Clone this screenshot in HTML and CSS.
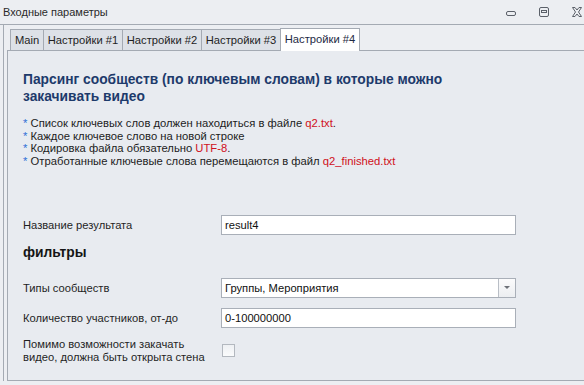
FILE: index.html
```html
<!DOCTYPE html>
<html lang="ru">
<head>
    <meta charset="UTF-8">
    <title>Входные параметры</title>
    <link rel="stylesheet" href="styles.css">
</head>
<body>
    <div class="titlebar">
        <span class="title">Входные параметры</span>
        <div class="controls">
            <svg class="ctl" width="12" height="12" viewBox="0 0 12 12">
                <rect x="1.5" y="5.5" width="9" height="4" rx="1.5" fill="none" stroke="#5b6069"/>
            </svg>
            <svg class="ctl" width="12" height="12" viewBox="0 0 12 12">
                <rect x="1.5" y="1.5" width="9" height="9" rx="1.5" fill="none" stroke="#5b6069"/>
                <rect x="3.5" y="4.5" width="5" height="2" fill="none" stroke="#5b6069"/>
            </svg>
            <svg class="ctl" width="12" height="12" viewBox="0 0 12 12">
                <path d="M1.5 1.5h2.5l2 2.5 2-2.5h2.5l-3 4.5 3 4.5h-2.5l-2-2.5-2 2.5h-2.5l3-4.5z" fill="none" stroke="#5b6069" stroke-linejoin="round"/>
            </svg>
        </div>
    </div>

    <div class="frame">
        <div class="tabs">
            <div class="tab tab-main">Main</div>
            <div class="tab">Настройки #1</div>
            <div class="tab">Настройки #2</div>
            <div class="tab">Настройки #3</div>
            <div class="tab active">Настройки #4</div>
        </div>

        <div class="panel">
            <h1 class="heading">Парсинг сообществ (по ключевым словам) в которые можно закачивать видео</h1>

            <ul class="notes">
                <li><span class="star">*</span> Список ключевых слов должен находиться в файле <span class="red">q2.txt</span>.</li>
                <li><span class="star">*</span> Каждое ключевое слово на новой строке</li>
                <li><span class="star">*</span> Кодировка файла обязательно <span class="red">UTF-8</span>.</li>
                <li><span class="star">*</span> Отработанные ключевые слова перемещаются в файл <span class="red">q2_finished.txt</span></li>
            </ul>

            <div class="row first">
                <label class="label">Название результата</label>
                <div class="field">result4</div>
            </div>

            <h2 class="section">фильтры</h2>

            <div class="row combo-row">
                <label class="label">Типы сообществ</label>
                <div class="field combo">
                    <span class="combo-text">Группы, Мероприятия</span>
                    <span class="combo-btn"><span class="arrow"></span></span>
                </div>
            </div>

            <div class="row">
                <label class="label">Количество участников, от-до</label>
                <div class="field">0-100000000</div>
            </div>

            <div class="row check-row">
                <label class="label">Помимо возможности закачать видео, должна быть открыта стена</label>
                <div class="checkbox"></div>
            </div>
        </div>
    </div>
</body>
</html>
```

FILE: styles.css
```css
body {
    margin: 0;
    font-family: "Liberation Sans", Arial, sans-serif;
    font-size: 11px;
    color: #1c1c1c;
    background-color: #eceef2;
    height: 385px;
    overflow: hidden;
}

.titlebar {
    height: 24px;
    display: flex;
    align-items: center;
    justify-content: space-between;
    padding-left: 3px;
    border-bottom: 1px solid #a4aab3;
}

.title {
    font-size: 11px;
    color: #2a2a2a;
}

.controls {
    display: flex;
    gap: 21px;
    padding-right: 1px;
    margin-top: -1px;
}

.frame {
    margin-left: 3px;
    border-left: 1px solid #a4aab3;
    padding: 3px 3px 0 3px;
}

.tabs {
    display: flex;
    align-items: flex-end;
    padding-left: 3px;
    height: 22px;
}

.tab {
    box-sizing: border-box;
    width: 80px;
    height: 21px;
    line-height: 20px;
    text-align: center;
    font-size: 11.2px;
    color: #1e1e1e;
    background-color: #dde1e7;
    border: 1px solid #a4aab3;
    border-bottom: none;
    margin-right: -1px;
}

.tab-main {
    width: 34px;
}

.tab.active {
    height: 23px;
    background-color: #fff;
    position: relative;
    z-index: 1;
    margin-bottom: -1px;
    color: #1e2a44;
}

.panel {
    width: 572px;
    height: 309px;
    border: 1px solid #a4aab3;
    background-color: #e8ebf0;
    padding: 20px 0 0 15px;
    box-sizing: content-box;
}

.heading {
    margin: 0;
    width: 450px;
    font-size: 13.8px;
    line-height: 17px;
    font-weight: bold;
    color: #1d3a6b;
}

.notes {
    list-style: none;
    margin: 12px 0 0 0;
    padding: 0;
    line-height: 12.7px;
    font-size: 11.25px;
}

.star {
    color: #2f6fd6;
}

.red {
    color: #d01020;
}

.row {
    display: grid;
    grid-template-columns: 198px 295px;
    align-items: center;
    margin-top: 10px;
}

.row.first {
    margin-top: 47px;
}

.row.combo-row {
    margin-top: 17px;
}

.label {
    font-size: 11.2px;
    color: #1f1f1f;
}

.field {
    height: 18px;
    line-height: 18px;
    padding: 0 3px;
    background-color: #fff;
    border: 1px solid #a9afb8;
    font-size: 11.2px;
    color: #111;
}

.combo {
    display: flex;
    padding-right: 0;
}

.combo-text {
    flex: 1;
}

.combo-btn {
    width: 16px;
    border-left: 1px solid #b9bec6;
    background: linear-gradient(#fbfbfc, #eceef1);
    display: flex;
    align-items: center;
    justify-content: center;
}

.arrow {
    width: 0;
    height: 0;
    border-left: 3px solid transparent;
    border-right: 3px solid transparent;
    border-top: 3px solid #6d7178;
}

.section {
    margin: 9px 0 0 0;
    font-size: 13.8px;
    line-height: 17px;
    font-weight: bold;
    color: #151515;
}

.check-row {
    margin-top: 10px;
    align-items: start;
}

.check-row .label {
    line-height: 13px;
    width: 190px;
}

.checkbox {
    width: 11px;
    height: 11px;
    margin: 6px 0 0 1px;
    border: 1px solid #b3b8bf;
    background: linear-gradient(#eef0f3, #fafbfc);
}
```
